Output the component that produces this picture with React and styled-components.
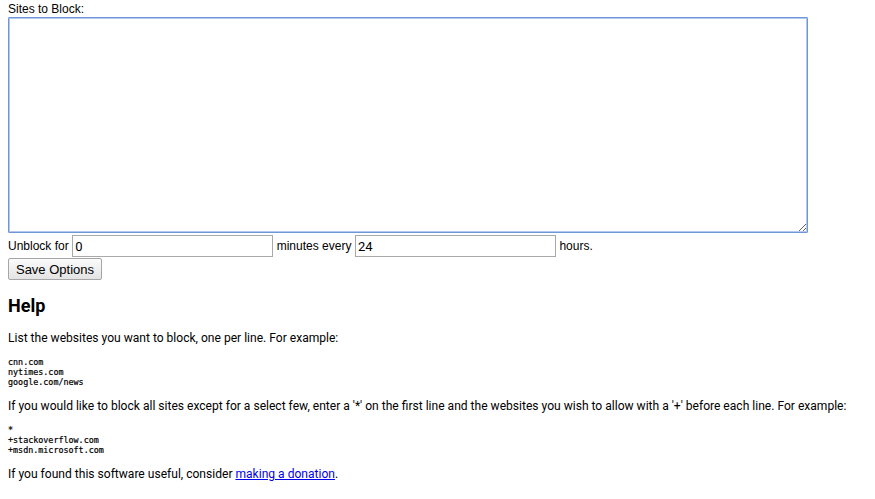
import React from 'react';
import styled, { createGlobalStyle } from 'styled-components';

const GlobalStyle = createGlobalStyle`
    body {
        margin: 0;
        background: #fff;
        color: #000;
        font-family: Roboto, "Liberation Sans", sans-serif;
        font-size: 12px;
    }
`;

const Page = styled.div`
    padding: 2px 8px 8px;
`;

const Form = styled.div`
    font-family: "Liberation Sans", Arial, sans-serif;
    font-size: 12px;
`;

const Label = styled.div`
    line-height: 15px;
`;

const SitesBox = styled.textarea`
    display: block;
    box-sizing: border-box;
    width: 800px;
    height: 216px;
    margin: 0;
    padding: 2px;
    border: 1px solid #6f96d9;
    box-shadow: 0 0 0 1px #b3c8ee inset;
    border-radius: 1px;
    outline: none;
    font-family: "Liberation Mono", monospace;
    font-size: 13px;
    resize: both;
`;

const Row = styled.div`
    display: flex;
    align-items: center;
    gap: 3.5px;
    margin-top: 2px;
    height: 22px;
`;

const NumberField = styled.input`
    box-sizing: border-box;
    width: 201px;
    height: 22px;
    margin: 0;
    padding: 1px 2px;
    border: 1px solid #a9a9a9;
    font-family: Roboto, "Liberation Sans", sans-serif;
    font-size: 13px;
    outline: none;
`;

const Button = styled.button`
    display: block;
    box-sizing: border-box;
    width: 94px;
    height: 22px;
    margin-top: 1px;
    padding: 0 6px;
    border: 1px solid #a6a6a6;
    border-radius: 2px;
    background: linear-gradient(#fbfbfb, #e3e3e3);
    font-family: "Liberation Sans", Arial, sans-serif;
    font-size: 13px;
    color: #000;
`;

const Heading = styled.h2`
    font-size: 18px;
    font-weight: bold;
    line-height: 21px;
    margin: 15px 0;
`;

const Text = styled.p`
    margin: 12px 0;
    line-height: 14px;
    font-size: 12.07px;
`;

const Code = styled.pre`
    margin: 12px 0;
    font-family: "DejaVu Sans Mono", "Liberation Mono", monospace;
    font-size: 8.4px;
    line-height: 10px;
    -webkit-text-stroke: 0.2px #000;
`;

const DonateLink = styled.a`
    color: #0000ee;
    text-decoration: underline;
`;

export default function App() {
    return (
        <Page>
            <GlobalStyle />
            <Form>
                <Label>Sites to Block:</Label>
                <SitesBox autoFocus defaultValue="" />
                <Row>
                    <span>Unblock for</span>
                    <NumberField defaultValue="0" />
                    <span>minutes every</span>
                    <NumberField defaultValue="24" />
                    <span>hours.</span>
                </Row>
                <Button>Save Options</Button>
            </Form>
            <Heading>Help</Heading>
            <Text>List the websites you want to block, one per line. For example:</Text>
            <Code>{'cnn.com\nnytimes.com\ngoogle.com/news'}</Code>
            <Text>If you would like to block all sites except for a select few, enter a '*' on the first line and the websites you wish to allow with a '+' before each line. For example:</Text>
            <Code>{'*\n+stackoverflow.com\n+msdn.microsoft.com'}</Code>
            <Text>If you found this software useful, consider <DonateLink href="#">making a donation</DonateLink>.</Text>
        </Page>
    );
}
